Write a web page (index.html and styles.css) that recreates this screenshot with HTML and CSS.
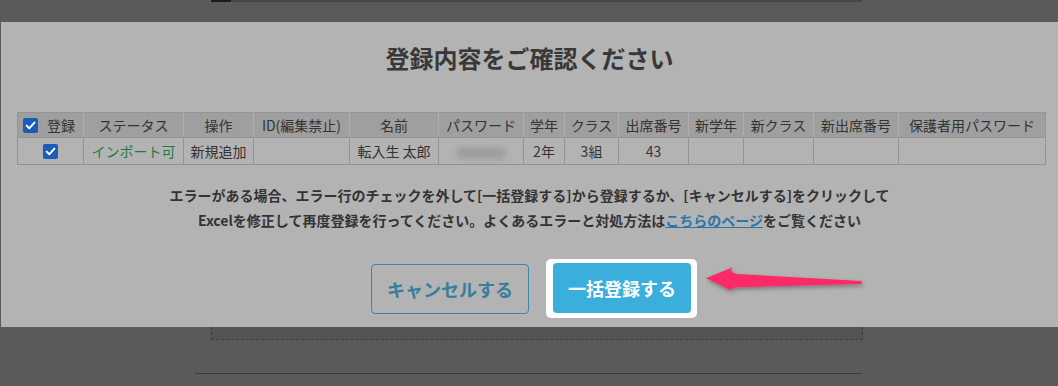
FILE: index.html
```html
<!DOCTYPE html>
<html lang="ja">
<head>
<meta charset="utf-8">
<title>登録内容をご確認ください</title>
<link rel="stylesheet" href="styles.css">
</head>
<body>
<div class="bg-top">
  <div class="bg-edge"><span class="bg-edge-dark"></span></div>
</div>
<div class="modal">
  <h1 class="title">登録内容をご確認ください</h1>
  <table class="grid">
    <colgroup>
      <col style="width:66px"><col style="width:100px"><col style="width:70px"><col style="width:96px">
      <col style="width:89px"><col style="width:85px"><col style="width:41px"><col style="width:54px">
      <col style="width:70px"><col style="width:55px"><col style="width:70px"><col style="width:85px">
      <col style="width:147px">
    </colgroup>
    <thead>
      <tr>
        <th class="th-check"><span class="th-check-inner"><span class="cb"><svg viewBox="0 0 15 15" width="15" height="15"><polyline points="3.6,7.6 6.3,10.3 11.4,4.6" fill="none" stroke="#fff" stroke-width="2" stroke-linecap="round" stroke-linejoin="round"/></svg></span>登録</span></th>
        <th>ステータス</th>
        <th>操作</th>
        <th>ID(編集禁止)</th>
        <th>名前</th>
        <th>パスワード</th>
        <th>学年</th>
        <th>クラス</th>
        <th>出席番号</th>
        <th>新学年</th>
        <th>新クラス</th>
        <th>新出席番号</th>
        <th>保護者用パスワード</th>
      </tr>
    </thead>
    <tbody>
      <tr>
        <td><span class="cb cb-row"><svg viewBox="0 0 15 15" width="15" height="15"><polyline points="3.6,7.6 6.3,10.3 11.4,4.6" fill="none" stroke="#fff" stroke-width="2" stroke-linecap="round" stroke-linejoin="round"/></svg></span></td>
        <td class="ok">インポート可</td>
        <td>新規追加</td>
        <td></td>
        <td>転入生 太郎</td>
        <td><span class="blurred"></span></td>
        <td>2年</td>
        <td>3組</td>
        <td>43</td>
        <td></td>
        <td></td>
        <td></td>
        <td></td>
      </tr>
    </tbody>
  </table>
  <p class="note">エラーがある場合、エラー行のチェックを外して[一括登録する]から登録するか、[キャンセルする]をクリックして<br>Excelを修正して再度登録を行ってください。よくあるエラーと対処方法は<a class="link" href="#">こちらのページ</a>をご覧ください</p>
  <div class="actions">
    <button class="btn btn-cancel" type="button">キャンセルする</button>
    <div class="spot"><button class="btn btn-primary" type="button">一括登録する</button></div>
  </div>
</div>
<div class="bg-bottom">
  <div class="dash-box"></div>
  <div class="bg-line"></div>
</div>
<svg class="arrow" width="170" height="40" viewBox="0 0 170 40">
  <defs>
    <filter id="sh" x="-10%" y="-40%" width="130%" height="200%">
      <feDropShadow dx="1" dy="2" stdDeviation="2" flood-color="#000" flood-opacity="0.35"/>
    </filter>
  </defs>
  <path d="M6,18.3 L32.7,7.3 Q28.5,11.5 36.7,14 L161.7,21 L161.7,24 L36.7,27.3 Q28.5,28.5 31.7,30.7 Z" fill="#fe2a67" filter="url(#sh)"/>
</svg>
</body>
</html>
```

FILE: styles.css
```css
html, body {
  margin: 0;
  padding: 0;
}
body {
  background: #5a5a5a;
  font-family: "Noto Sans CJK JP", "Noto Sans", sans-serif;
  color: #353535;
  width: 1058px;
  height: 386px;
  overflow: hidden;
  position: relative;
}
.bg-top {
  height: 22px;
}
.bg-edge {
  margin-left: 211px;
  width: 651px;
  height: 2px;
  background: #464646;
  display: flex;
}
.bg-edge-dark {
  width: 20px;
  height: 2px;
  background: #1c1c1c;
}
.modal {
  margin-left: 1px;
  height: 305px;
  box-sizing: border-box;
  padding-top: 21px;
  background: #b3b3b3;
}
.title {
  margin: 0;
  font-size: 24px;
  line-height: 29px;
  font-weight: 700;
  text-align: center;
  color: #383838;
}
.grid {
  margin: 40px 0 0 16px;
  border-collapse: collapse;
  table-layout: fixed;
  width: 1028px;
  font-size: 14px;
  color: #333;
}
.grid th, .grid td {
  padding: 0;
  text-align: center;
  white-space: nowrap;
  font-weight: 400;
}
.grid th {
  height: 24px;
  background: #9f9f9f;
  border: 1px solid #959595;
  border-right-color: #aeaeae;
  border-left-color: #aeaeae;
  line-height: 24px;
}
.grid th:first-child { border-left-color: #959595; }
.grid th:last-child { border-right-color: #959595; }
.grid td {
  height: 26px;
  border: 1px solid #939393;
  line-height: 26px;
}
.th-check-inner {
  display: flex;
  align-items: center;
  gap: 9px;
  padding-left: 5px;
}
.cb {
  display: inline-flex;
  width: 15px;
  height: 15px;
  border-radius: 2px;
  background: #1a5cb8;
}
.cb-row {
  vertical-align: middle;
  margin-top: -3px;
}
.ok {
  color: #1f7a3e;
}
.blurred {
  display: inline-block;
  width: 50px;
  height: 12px;
  border-radius: 6px;
  background: #9c9c9c;
  filter: blur(3px);
  vertical-align: middle;
}
.note {
  margin: 18px 0 0;
  font-size: 14px;
  line-height: 25px;
  font-weight: 700;
  text-align: center;
  color: #333;
}
.link {
  color: #2b74a6;
  text-decoration: underline;
}
.actions {
  margin-top: 26px;
  display: flex;
  justify-content: center;
  align-items: center;
  gap: 17px;
  padding-left: 9px;
}
.btn {
  font-family: "Noto Sans CJK JP", "Noto Sans", sans-serif;
  font-size: 18px;
  font-weight: 700;
  height: 50px;
  border-radius: 4px;
  padding: 0;
  cursor: pointer;
}
.btn-cancel {
  width: 158px;
  background: transparent;
  border: 1px solid #3b86a6;
  color: #357e9c;
}
.spot {
  background: #fff;
  border-radius: 5px;
  padding: 4px 6px 5px 7px;
  display: flex;
}
.btn-primary {
  width: 138px;
  background: #3aafdb;
  border: none;
  color: #fff;
}
.bg-bottom {
  height: 59px;
}
.dash-box {
  margin-left: 211px;
  width: 650px;
  height: 12px;
  background: #545454;
  border: 1px dashed #3e3e3e;
  border-top: none;
}
.bg-line {
  margin-top: 33px;
  margin-left: 195px;
  width: 667px;
  height: 1px;
  background: #3b3b3b;
}
.arrow {
  position: absolute;
  left: 700px;
  top: 260px;
}
```
